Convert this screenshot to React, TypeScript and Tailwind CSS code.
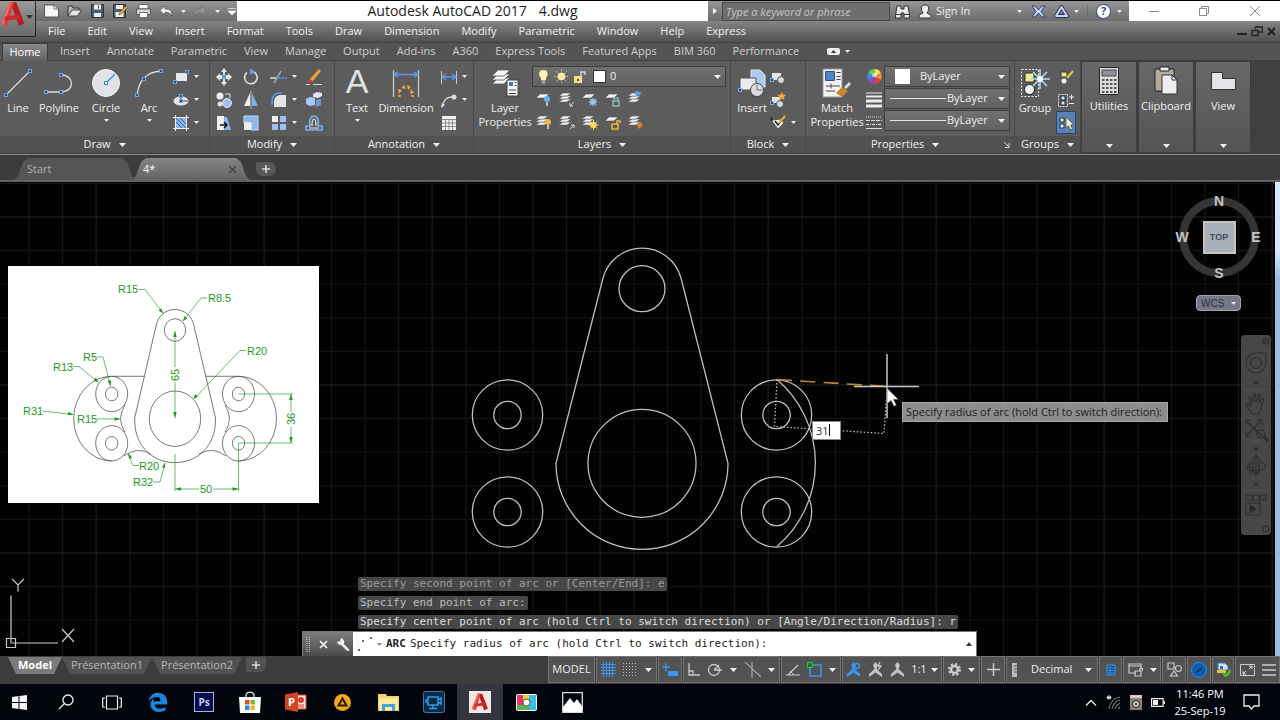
import React from "react";

type Kids = { children?: React.ReactNode };

function Icon({ w = 18, h = 18, vb, children }: { w?: number; h?: number; vb?: string } & Kids) {
  return (
    <svg width={w} height={h} viewBox={vb ?? `0 0 ${w} ${h}`} fill="none" aria-hidden="true" className="shrink-0">
      {children}
    </svg>
  );
}

function Caret({ size = "s" }: { size?: "s" | "m" }) {
  return size === "s" ? (
    <Icon w={5} h={3}>
      <path d="M0 0h5L2.500 3z" fill="#eee" />
    </Icon>
  ) : (
    <Icon w={7} h={4}>
      <path d="M0 0h7L3.500 4z" fill="#f2f2f2" />
    </Icon>
  );
}

const node = (x: number, y: number) => (
  <rect x={x - 1.5} y={y - 1.5} width="3" height="3" fill="#3a4a66" stroke="#6fa8ee" />
);

/* ---------- ribbon building blocks ---------- */

function Panel({ title, width, launcher, children }: { title: string; width: string; launcher?: boolean } & Kids) {
  return (
    <section className={`flex shrink-0 flex-col border-r border-[#474747] ${width}`}>
      <div className="flex flex-1 items-start px-1 pt-1">{children}</div>
      <div className="flex h-[17px] items-center bg-[#515151]">
        <button className="flex flex-1 items-center justify-center gap-2">
          {title}
          <Caret size="m" />
        </button>
        {launcher && (
          <button aria-label={`${title} settings`} className="mr-1">
            <Icon w={6} h={6}>
              <path d="M0 0l4 4M5 1v4.500H1" stroke="#ddd" />
            </Icon>
          </button>
        )}
      </div>
    </section>
  );
}

function Big({ label, width, arrow, children }: { label: string; width: string; arrow?: boolean } & Kids) {
  return (
    <button className={`flex shrink-0 flex-col items-center ${width}`}>
      <span className="flex h-9 items-center justify-center">{children}</span>
      <span className="text-center leading-[14px]">{label}</span>
      {arrow && (
        <span className="mt-1">
          <Caret />
        </span>
      )}
    </button>
  );
}

function Small({ label, arrow, active, children }: { label: string; arrow?: boolean; active?: boolean } & Kids) {
  return (
    <button
      aria-label={label}
      className={`flex h-[23px] items-center justify-center gap-1 ${active ? "border border-[#26456f] bg-[#5b82b8]" : ""}`}
    >
      {children}
      {arrow && <Caret />}
    </button>
  );
}

/* ---------- title and menus ---------- */

function AutocadMark({ size }: { size: number }) {
  return (
    <svg width={size} height={size} viewBox="0 0 24 24" aria-hidden="true">
      <path d="M9 1h6l7.500 20-5 2L11 5z" fill="#b71c22" />
      <path d="M9 1h4L6.500 23 1 21z" fill="#df3a35" />
      <path d="M9 1h2L3.500 22 1 21z" fill="#ee6a62" />
      <path d="M5 14.500l12-2 1.500 4L4 18z" fill="#cf2a2a" />
    </svg>
  );
}

function TitleBar() {
  return (
    <div className="flex h-5 bg-gradient-to-b from-[#979797] to-[#6b6b6b]">
      <div className="flex w-[237px] shrink-0 items-center gap-2 pl-[44px]">
        <button aria-label="New">
          <Icon w={15} h={14}>
            <path d="M.5 1h10l4 4v8H.5z" fill="#f4f4f4" stroke="#555" />
            <path d="M10 1v4h4" stroke="#777" />
          </Icon>
        </button>
        <button aria-label="Open">
          <Icon w={15} h={14}>
            <path d="M1 12V2h4l1 2h6v3" stroke="#333" fill="#bbb" />
            <path d="M1 12l4-6h9.500l-4 6z" fill="#e4e4e4" stroke="#444" />
          </Icon>
        </button>
        <button aria-label="Save">
          <Icon w={15} h={14}>
            <path d="M1.500.5h12v13h-12z" fill="#4f5c6b" stroke="#333" />
            <path d="M4 .5h7v5H4zM4 9h7v4H4z" fill="#eee" />
            <path d="M8.500 1.500v3" stroke="#444" />
          </Icon>
        </button>
        <button aria-label="Save As">
          <Icon w={15} h={14}>
            <path d="M.5.5h12v13H.5z" fill="#4f5c6b" stroke="#333" />
            <path d="M3 1h7v4H3zM2.500 8h8v5h-8z" fill="#eee" />
            <path d="M6 11l1-3 6-6 1.500 1.500-6 6z" fill="#f0b64a" stroke="#7a4a12" strokeWidth=".7" />
          </Icon>
        </button>
        <button aria-label="Plot">
          <Icon w={15} h={14}>
            <path d="M3 .5h9V5H3z" fill="#fff" stroke="#666" />
            <path d="M.5 5h14v5.500H.5z" fill="#d9d9d9" stroke="#555" />
            <path d="M3.500 8.500h8v5h-8z" fill="#fff" stroke="#5b6f8c" />
          </Icon>
        </button>
        <button aria-label="Undo" className="flex items-center gap-2">
          <Icon w={14} h={12}>
            <path d="M6 .8v3c5 0 7 2 7 7.500-1.500-3-3.500-4-7-4v3L.8 5.500z" fill="#f0f0f0" stroke="#444" strokeWidth=".7" />
          </Icon>
          <Caret />
        </button>
        <button aria-label="Redo" className="flex items-center gap-2">
          <Icon w={13} h={12}>
            <path d="M7 .8v3c-5 0-7 2-7 7.500 1.500-3 3.500-4 7-4v3l5.200-4.800z" fill="#959595" stroke="#6f6f6f" strokeWidth=".7" />
          </Icon>
          <Caret />
        </button>
        <button aria-label="Customize toolbar">
          <Icon w={8} h={7}>
            <path d="M0 .5h8M0 3h8L4 7z" fill="#fff" stroke="#fff" strokeWidth=".6" />
          </Icon>
        </button>
      </div>
      <h1 className="flex flex-1 items-center justify-center gap-3 bg-white text-sm whitespace-nowrap text-[#1c1c1c]">
        <span>Autodesk AutoCAD 2017</span>
        <span>4.dwg</span>
      </h1>
      <div className="flex w-[421px] shrink-0 items-center">
        <button aria-label="Collapse search" className="flex w-[14px] justify-center">
          <Icon w={4} h={6}>
            <path d="M0 0l4 3-4 3z" fill="#fff" />
          </Icon>
        </button>
        <input
          aria-label="Search"
          placeholder="Type a keyword or phrase"
          className="h-[19px] w-[168px] border border-[#484848] bg-[#6e6e6e] px-[3px] text-[11px] italic outline-none placeholder:text-[#c4c4c4]"
        />
        <button aria-label="Find" className="ml-[5px]">
          <Icon w={15} h={15}>
            <path d="M2 2h4v3h3V2h4l1.500 9v3H9V9H6v5H.5v-3z" fill="#e8e8e8" stroke="#333" />
            <path d="M1 10.500h4.500M9 10.500h5" stroke="#333" />
          </Icon>
        </button>
        <button className="ml-2 flex w-[104px] items-center gap-1 text-[11px] text-[#ededed]">
          <Icon w={14} h={15}>
            <path d="M7 1c5 0 4 5 2 8l4 2v3H1v-3l4-2C3 6 2 1 7 1z" fill="#efefef" stroke="#333" />
          </Icon>
          <span className="flex-1 text-left">Sign In</span>
          <Caret />
        </button>
        <button aria-label="Exchange Apps" className="ml-[9px]">
          <Icon w={15} h={13}>
            <path d="M1 1h3l3.500 4L11 1h3l-4 5.500 4 5.500h-3L7.500 8 4 12H1l4-5.500z" fill="#c9dbf5" stroke="#2c3d78" />
          </Icon>
        </button>
        <button aria-label="Stay Connected" className="ml-2 flex items-center gap-[5px]">
          <Icon w={15} h={13}>
            <path d="M7.500 2L2 11h11z" stroke="#2b3a63" strokeWidth="4" strokeLinejoin="round" />
            <path d="M7.500 2L2 11h11z" stroke="#c9d6ee" strokeWidth="2" strokeLinejoin="round" />
          </Icon>
          <Caret />
        </button>
        <span className="mx-2 h-3 border-l border-[#6d6d6d]" />
        <button aria-label="Help" className="flex items-center gap-[6px]">
          <span className="flex size-[15px] items-center justify-center rounded-full border border-[#27467c] bg-white text-[11px] font-bold text-[#27509a]">
            ?
          </span>
          <Caret />
        </button>
      </div>
      <div className="flex w-[151px] shrink-0 items-center justify-around bg-white">
        <button aria-label="Minimize">
          <Icon w={10} h={10}>
            <path d="M0 5.500h10" stroke="#8c8c8c" />
          </Icon>
        </button>
        <button aria-label="Restore">
          <Icon w={10} h={10}>
            <path d="M.5 2.500h7v7h-7zM2.500 2.500v-2h7v7h-2" stroke="#8c8c8c" />
          </Icon>
        </button>
        <button aria-label="Close">
          <Icon w={10} h={10}>
            <path d="M0 0l10 10M10 0L0 10" stroke="#8c8c8c" />
          </Icon>
        </button>
      </div>
    </div>
  );
}

const menus = ["File", "Edit", "View", "Insert", "Format", "Tools", "Draw", "Dimension", "Modify", "Parametric", "Window", "Help", "Express"];

function MenuBar() {
  return (
    <nav className="flex h-[21px] items-center bg-gradient-to-b from-[#858585] to-[#515151] pr-1 pl-12 text-[11px] text-[#f0f0f0]">
      <div className="flex flex-1 gap-[22px]">
        {menus.map((m) => (
          <button key={m}>{m}</button>
        ))}
      </div>
      <div className="flex items-center gap-1">
        <Icon w={10} h={11}>
          <path d="M0 8h10" stroke="#222" strokeWidth="2" />
        </Icon>
        <Icon w={12} h={11}>
          <path d="M4.500 3V1h7v5H8M1 4.500h6v5H1z" stroke="#222" strokeWidth="1.400" />
        </Icon>
        <Icon w={9} h={11}>
          <path d="M1 2l7 7M8 2L1 9" stroke="#222" strokeWidth="2" />
        </Icon>
      </div>
    </nav>
  );
}

const ribbonTabs = ["Insert", "Annotate", "Parametric", "View", "Manage", "Output", "Add-ins", "A360", "Express Tools", "Featured Apps", "BIM 360", "Performance"];

function RibbonTabs() {
  return (
    <nav className="flex h-[19px] items-center gap-3 border-t border-b border-[#3f3f3f] bg-[#545454] text-[11px] text-[#cfcfcf]">
      <button className="ml-[2px] flex h-[18px] w-[46px] items-center justify-center border-x border-t border-[#3b3b3b] bg-gradient-to-b from-[#8a8a8a] to-[#606060] text-white">
        Home
      </button>
      <div className="flex gap-[17px]">
        {ribbonTabs.map((t) => (
          <button key={t} className="whitespace-nowrap">
            {t}
          </button>
        ))}
      </div>
      <button aria-label="Ribbon display" className="ml-4 flex items-center gap-[5px]">
        <Icon w={13} h={7}>
          <rect width="13" height="7" rx="2" fill="#eee" />
          <path d="M4 5l2.500-3L9 5z" fill="#333" />
        </Icon>
        <Caret />
      </button>
    </nav>
  );
}

/* ---------- ribbon ---------- */

function DrawPanel() {
  return (
    <Panel title="Draw" width="w-[210px]">
      <Big label="Line" width="w-7">
        <Icon w={30} h={30}>
          <path d="M3 27L27 3" stroke="#ddd" strokeWidth="1.300" />
          {node(3, 27)}
          {node(27, 3)}
        </Icon>
      </Big>
      <Big label="Polyline" width="w-[54px]">
        <Icon w={30} h={30}>
          <path d="M2 24h15c14 0 14-17 0-17" stroke="#ddd" strokeWidth="1.300" />
          {node(2, 24)}
          {node(17, 24)}
          {node(17, 7)}
        </Icon>
      </Big>
      <Big label="Circle" width="w-10" arrow>
        <Icon w={30} h={30}>
          <circle cx="15" cy="15" r="13.500" fill="#dfe2e6" stroke="#f6f6f6" />
          <path d="M15 15l9-9" stroke="#4c87d6" strokeWidth="1.300" />
          <rect x="13.500" y="13.500" width="3" height="3" fill="#fff" stroke="#3f82dc" />
        </Icon>
      </Big>
      <Big label="Arc" width="w-[46px]" arrow>
        <Icon w={30} h={30}>
          <path d="M3 27C5 12 12 4 27 3" stroke="#ddd" strokeWidth="1.300" />
          {node(3, 27)}
          {node(10, 11)}
          {node(27, 3)}
        </Icon>
      </Big>
      <div className="flex flex-col">
        <Small label="Rectangle" arrow>
          <Icon>
            <path d="M4 5h11v8H4z" fill="#e8e8e8" />
            {node(3, 14)}
            {node(15, 4)}
          </Icon>
        </Small>
        <Small label="Ellipse" arrow>
          <Icon>
            <ellipse cx="9" cy="10" rx="7.500" ry="4.500" fill="#e4e6ea" />
            <path d="M9 5v5h7" stroke="#444" />
            {node(9, 10)}
            {node(9, 5)}
          </Icon>
        </Small>
        <Small label="Hatch" arrow>
          <Icon>
            <path d="M4 4h10v10H4z" fill="#8fb4e8" />
            <path d="M4 8l6 6M4 4l10 10M8 4l6 6" stroke="#2c5ca5" />
            <path d="M3.500 1v16M14.500 1v16M1 3.500h16M1 14.500h16" stroke="#eee" />
          </Icon>
        </Small>
      </div>
    </Panel>
  );
}

function ModifyPanel() {
  return (
    <Panel title="Modify" width="w-[125px]">
      <div className="grid flex-1 grid-cols-[20px_34px_30px_1fr]">
        <Small label="Move">
          <Icon>
            <path d="M9 0l3 4h-2v3h3V5l4 4-4 4v-2h-3v3h2l-3 4-3-4h2v-3H5v2L1 9l4-4v2h3V4H6z" fill="#e9e9e9" />
            <rect x="7" y="7" width="4" height="4" fill="#6a9be0" />
          </Icon>
        </Small>
        <Small label="Rotate">
          <Icon>
            <path d="M5 4.500a6.300 6.300 0 1 0 7-.5" stroke="#ddd" strokeWidth="1.600" />
            <path d="M8 0l5 4-5 3z" fill="#5b9cf0" />
          </Icon>
        </Small>
        <Small label="Trim" arrow>
          <Icon>
            <path d="M0 10h6" stroke="#ddd" strokeWidth="1.500" />
            <path d="M9 10h9" stroke="#5b9cf0" strokeWidth="1.500" strokeDasharray="2 1" />
            <path d="M4 15l7-12" stroke="#9ab" strokeWidth="1.500" />
          </Icon>
        </Small>
        <Small label="Erase">
          <Icon>
            <path d="M4 12L14 1l2 2-9 11z" fill="#f0a23a" />
            <path d="M3 14l2-3 3 2-3 2z" fill="#d8402c" />
            <path d="M1 16.500h4M8 16.500h9" stroke="#ddd" />
          </Icon>
        </Small>
        <Small label="Copy">
          <Icon>
            <circle cx="5" cy="5" r="3.500" fill="#eee" />
            <circle cx="5" cy="13" r="2.500" fill="#ddd" />
            <circle cx="12" cy="12" r="4.500" fill="#9cc0f0" stroke="#dcebff" />
            <path d="M10 3h5v4" stroke="#ddd" />
          </Icon>
        </Small>
        <Small label="Mirror">
          <Icon>
            <path d="M8 2v13H2z" fill="#eee" />
            <path d="M10 2v13h6z" fill="#7fb0ee" />
            <path d="M9 0v18" stroke="#bbb" />
          </Icon>
        </Small>
        <Small label="Fillet" arrow>
          <Icon>
            <path d="M4 16V11c0-5 3-7 7-7h5v12z" fill="#e5e5e5" />
            <path d="M2 14V10c0-6 4-8 8-8h2" stroke="#5b9cf0" strokeWidth="1.500" />
          </Icon>
        </Small>
        <Small label="Explode">
          <Icon>
            <path d="M1 8l4-2 5 1v7l-5 1-4-2z" fill="#a9c9f2" />
            <path d="M8 3l4-2 5 1v3l-4 2-5-1z" fill="#dfeaf8" />
            <path d="M11 9l5-1v6l-5 2z" fill="#6d9cdb" />
          </Icon>
        </Small>
        <Small label="Stretch">
          <Icon>
            <path d="M2 2h7v14H2z" fill="#f0f0f0" />
            <path d="M9 3h3l4 13H9z" fill="#8db6ec" />
            <path d="M5 11h6M9 8l3 3-3 3" stroke="#111" strokeWidth="1.500" />
          </Icon>
        </Small>
        <Small label="Scale">
          <Icon>
            <path d="M2 2h14v14H9V9H2z" fill="#8db6ec" stroke="#c8defa" />
            <path d="M2 8h7.500v8H2z" fill="#ececec" />
          </Icon>
        </Small>
        <Small label="Array" arrow>
          <Icon>
            <path d="M2 2h6v6H2z" fill="#f0f0f0" />
            <path d="M10 2h6v6h-6zM2 10h6v6H2zM10 10h6v6h-6z" fill="#9cc2f3" />
          </Icon>
        </Small>
        <Small label="Offset">
          <Icon>
            <path d="M1 16h16v-4h-4C14 8 13 2 9 2S4 8 5 12H1z" stroke="#7eaef0" strokeWidth="1.600" />
            <path d="M4 14h10M7 12c0-4 0-7 2-7s2 3 2 7" stroke="#e8e8e8" strokeWidth="1.200" />
          </Icon>
        </Small>
      </div>
    </Panel>
  );
}

function AnnotationPanel() {
  return (
    <Panel title="Annotation" width="w-[139px]">
      <Big label="Text" width="w-9" arrow>
        <span className="self-start font-['Liberation_Sans',sans-serif] text-[34px] leading-8 text-[#e2e2e2]">A</span>
      </Big>
      <Big label="Dimension" width="w-[62px]">
        <Icon w={30} h={30}>
          <path d="M2.500 2v27M27.500 2v27" stroke="#ccc" strokeWidth="1.300" />
          <path d="M3 6.500h24M7 4L3 6.500 7 9M23 4l4 2.500L23 9" stroke="#5b9cf0" strokeWidth="1.300" />
          <path d="M8 26l-1-5 4 1zM10 20l3-3 2 4zM16 17l4 2-3 3zM20 21l3 4-4 1z" fill="#f2a83a" />
          <path d="M7 28h3M20 28h3" stroke="#e39422" strokeWidth="2" />
        </Icon>
      </Big>
      <div className="flex flex-1 flex-col">
        <Small label="Linear" arrow>
          <Icon>
            <path d="M1.500 3v13M16.500 3v13" stroke="#ccc" />
            <path d="M2 9h14M6 6L2 9l4 3M12 6l4 3-4 3" stroke="#5b9cf0" strokeWidth="1.400" />
          </Icon>
        </Small>
        <Small label="Leader" arrow>
          <Icon>
            <path d="M2 16C4 9 6 6 12 6" stroke="#ddd" strokeWidth="1.300" />
            <path d="M1 17l1-5 3 2z" fill="#ddd" />
            <circle cx="14" cy="6" r="2.500" fill="#ddd" />
          </Icon>
        </Small>
        <Small label="Table">
          <span className="mr-2">
            <Icon w={14} h={14}>
              <path d="M0 0h14v14H0z" fill="#f0f0f0" />
              <path d="M0 3.500h14M0 7h14M0 10.500h14M3.500 3v11M7 3v11M10.500 3v11" stroke="#777" strokeWidth=".8" />
            </Icon>
          </span>
        </Small>
      </div>
    </Panel>
  );
}

const layerTools: { label: string; stack: boolean; mark: React.ReactNode }[] = [
  { label: "Layer Off", stack: false, mark: <><circle cx="12" cy="9" r="3" fill="#6ab0f5" /><path d="M12 12v4" stroke="#ddd" strokeWidth="1.500" /></> },
  { label: "Isolate", stack: true, mark: <path d="M16 12l-4 4m0-3v3h3" stroke="#ddd" /> },
  { label: "Freeze", stack: false, mark: <path d="M12 8v8M8 12h8M9 9l6 6M15 9l-6 6" stroke="#9fc8ff" strokeWidth="1.300" /> },
  { label: "Lock", stack: false, mark: <path d="M9 11h6v5H9zM10 11V8h4v3" stroke="#85b8b4" strokeWidth="1.500" /> },
  { label: "Make Current", stack: true, mark: <path d="M6 3l4-2 5 2-4 3z" fill="#5b9cf0" /> },
  { label: "Turn All On", stack: true, mark: <><circle cx="13" cy="9" r="3" fill="#f7b23c" /><path d="M13 12v4" stroke="#ddd" strokeWidth="1.500" /></> },
  { label: "Unisolate", stack: true, mark: <path d="M12 16l4-4m-3 0h3v3" stroke="#ddd" /> },
  { label: "Thaw All", stack: true, mark: <><circle cx="12.500" cy="12" r="3" fill="#fbdc5a" /><path d="M12.500 7v10M7.500 12h10M9 8.500l7 7M16 8.500l-7 7" stroke="#fbdc5a" /></> },
  { label: "Unlock", stack: false, mark: <path d="M8 11h6v5H8zM13 11V8h3v2" stroke="#f2b62f" strokeWidth="1.500" /> },
  { label: "Match Layer", stack: true, mark: <path d="M10 12l3-3 3 3-4 4z" fill="#e0852b" /> },
];

function LayersPanel() {
  return (
    <Panel title="Layers" width="w-[257px]">
      <Big label="Layer Properties" width="w-[54px]">
        <Icon w={30} h={30}>
          {[11, 7, 3].map((y) => (
            <path key={y} d={`M2 ${y + 5}l6-6 12 0-6 6z`} fill="#f4f4f4" stroke="#555" strokeWidth=".8" />
          ))}
          <path d="M17 12h11v16H17z" fill="#f5f5f5" stroke="#444" />
          <path d="M19 14h4v4h-4z" fill="#3b78c8" />
          <path d="M24.500 14.500h2M24.500 17.500h2M19 22h7M19 25.500h7" stroke="#444" />
        </Icon>
      </Big>
      <div className="flex flex-1 flex-col">
        <div className="mt-px flex h-[21px] items-center gap-1 border border-[#3d3d3d] bg-gradient-to-b from-[#707070] to-[#616161] px-1">
          <Icon w={13} h={15}>
            <path d="M6.500 1c5 0 5 5 2.500 8v2H4V9C1 6 1.500 1 6.500 1z" fill="#fff2b0" />
            <path d="M4.500 12h4M5 14h3" stroke="#ddd" />
          </Icon>
          <Icon w={15} h={15}>
            <circle cx="7.500" cy="7.500" r="3.800" fill="#fff0a8" />
            <path d="M7.500 0v15M0 7.500h15M2 2l11 11M13 2L2 13" stroke="#e8d9a8" strokeDasharray="1.500 1" strokeWidth=".8" />
          </Icon>
          <Icon w={14} h={14}>
            <path d="M1 6h8v7H1z" fill="#f3df83" />
            <path d="M8 6V2h4v3" stroke="#ddd" strokeWidth="1.300" />
            <path d="M4 9h2v2H4z" fill="#555" />
          </Icon>
          <span className="ml-[2px] size-[13px] border border-[#333] bg-white" />
          <select aria-label="Layer" className="flex-1 appearance-none bg-transparent text-[11px] outline-none">
            <option>0</option>
          </select>
          <Caret size="m" />
        </div>
        <div className="grid grid-cols-[repeat(5,23px)]">
          {layerTools.map((t) => (
            <Small key={t.label} label={t.label}>
              <Icon>
                {t.stack ? (
                  [8, 5, 2].map((y) => (
                    <path key={y} d={`M1 ${y + 4}l4-3h8l-4 3z`} fill="#f1f1f1" stroke="#666" strokeWidth=".6" />
                  ))
                ) : (
                  <path d="M1 8l4-4h9l-4 4z" fill="#f1f1f1" stroke="#555" strokeWidth=".6" />
                )}
                {t.mark}
              </Icon>
            </Small>
          ))}
        </div>
      </div>
    </Panel>
  );
}

function BlockPanel() {
  return (
    <Panel title="Block" width="w-[75px]">
      <Big label="Insert" width="w-[34px]">
        <Icon w={30} h={30}>
          <path d="M14 2h9l5 5v12H14z" fill="#a9c9ee" stroke="#dcebfb" />
          <path d="M3 10h16v12H3z" fill="#e9e9ee" stroke="#555" />
          <circle cx="20" cy="22" r="6.500" fill="#dcdde4" stroke="#444" />
          <path d="M20 17v5h5" stroke="#777" />
          {node(3, 22)}
        </Icon>
      </Big>
      <div className="flex flex-1 flex-col items-start">
        <Small label="Create Block">
          <Icon>
            <path d="M3 5h9v7H3z" fill="#e5e5e5" />
            <circle cx="12" cy="12" r="3.500" fill="#d4d8e0" stroke="#555" />
            {node(3, 12)}
          </Icon>
        </Small>
        <Small label="Edit Block">
          <Icon>
            <path d="M3 6h8v6H3z" fill="#e5e5e5" />
            <circle cx="11" cy="13" r="3.500" fill="#d4d8e0" stroke="#555" />
            <path d="M13 1l1 2.500 3 .5-2 2 .5 3L13 7.500 10 9l.5-3-2-2 3-.5z" fill="#f2a43a" />
            {node(3, 12)}
          </Icon>
        </Small>
        <Small label="Edit Attributes" arrow>
          <Icon>
            <path d="M2 6l7 9 6-6-3-4z" fill="#eee" stroke="#555" />
            <path d="M2 3l1 4M6 7l3 4 4-5" stroke="#222" strokeWidth="1.500" />
            <path d="M10 9l6-7" stroke="#f2a43a" strokeWidth="2" />
          </Icon>
        </Small>
      </div>
    </Panel>
  );
}

function PropertiesPanel() {
  const box = "flex h-[21px] items-center border border-[#3d3d3d] bg-gradient-to-b from-[#707070] to-[#616161] pr-1";
  return (
    <Panel title="Properties" width="w-[209px]" launcher>
      <Big label="Match Properties" width="w-[54px]">
        <Icon w={30} h={30}>
          <path d="M1 1h19v28H1z" fill="#f2f2f2" stroke="#999" />
          <path d="M3.500 3.500h9v9h-9z" fill="#4b86c9" stroke="#33537c" />
          <path d="M14.500 4.500h4M14.500 8.500h4M14.500 11.500h4M4 18h14M4 23h9M9 15.500v5" stroke="#444" />
          <path d="M14 25l6-6 6 4-6 6z" fill="#c98130" />
          <path d="M23 20l5-5" stroke="#ddd" strokeWidth="3" />
        </Icon>
      </Big>
      <div className="flex w-5 shrink-0 flex-col items-center">
        <Small label="Color">
          <Icon w={15} h={15}>
            <path d="M7.500 7.500V0A7.500 7.500 0 0 1 14 4z" fill="#f6e64a" />
            <path d="M7.500 7.500L14 4a7.500 7.500 0 0 1 0 7z" fill="#f08a3a" />
            <path d="M7.500 7.500L14 11a7.500 7.500 0 0 1-6.500 4z" fill="#de3f3f" />
            <path d="M7.500 7.500V15A7.500 7.500 0 0 1 1 11z" fill="#8d4bc0" />
            <path d="M7.500 7.500L1 11a7.500 7.500 0 0 1 0-7z" fill="#3f83e8" />
            <path d="M7.500 7.500L1 4a7.500 7.500 0 0 1 6.500-4z" fill="#5cc765" />
            <circle cx="7.500" cy="6" r="2.500" fill="#fff" opacity=".5" />
          </Icon>
        </Small>
        <Small label="Lineweight">
          <Icon w={16} h={16}>
            <path d="M0 1h16" stroke="#eee" />
            <path d="M0 4.500h16" stroke="#eee" strokeWidth="2" />
            <path d="M0 9h16M0 14h16" stroke="#eee" strokeWidth="3" />
          </Icon>
        </Small>
        <Small label="Linetype">
          <Icon w={16} h={14}>
            <path d="M0 1h16" stroke="#ddd" strokeDasharray="1 1" />
            <path d="M0 4.500h16" stroke="#ddd" strokeDasharray="4 1" />
            <path d="M0 8.500h16" stroke="#ddd" strokeDasharray="3 1 1 1" />
            <path d="M0 12.500h16" stroke="#ddd" />
          </Icon>
        </Small>
      </div>
      <div className="flex min-w-0 flex-1 flex-col gap-px pt-px">
        <div className={box}>
          <span className="mx-[10px] size-[15px] shrink-0 bg-white" />
          <select aria-label="Object color" className="min-w-0 flex-1 appearance-none bg-transparent text-[11px] outline-none">
            <option>ByLayer</option>
          </select>
          <Caret size="m" />
        </div>
        {["Object lineweight", "Object linetype"].map((l) => (
          <div key={l} className={box}>
            <span className="mr-px ml-[5px] w-14 shrink-0 border-t border-[#e4e4e4]" />
            <select aria-label={l} className="min-w-0 flex-1 appearance-none bg-transparent text-[11px] outline-none">
              <option>ByLayer</option>
            </select>
            <Caret size="m" />
          </div>
        ))}
      </div>
    </Panel>
  );
}

function GroupsPanel() {
  return (
    <Panel title="Groups" width="w-[66px]">
      <Big label="Group" width="w-8">
        <Icon w={30} h={30}>
          <path d="M1.500 1.500h17v27h-17z" stroke="#eee" strokeDasharray="2 1.500" />
          <path d="M5 5h9v9H5z" fill="#f1ec8e" stroke="#333" />
          <circle cx="9.500" cy="21.500" r="5" fill="#eef1f5" stroke="#222" />
          <path d="M20 1v20M10 11h20M13 4l14 14M27 4L13 18" stroke="#a9dcff" strokeWidth="1.500" />
          <circle cx="20" cy="11" r="3" fill="#fff" />
        </Icon>
      </Big>
      <div className="ml-[5px] flex w-[22px] flex-col">
        <Small label="Ungroup">
          <Icon>
            <path d="M4 4h6v5H4z" fill="#f1ec8e" stroke="#333" />
            <circle cx="7" cy="13" r="2.500" fill="#eee" />
            <path d="M10 10l6-7" stroke="#e8c94a" strokeWidth="2" />
          </Icon>
        </Small>
        <Small label="Group Edit">
          <Icon>
            <path d="M1.500 3.500h9v12h-9z" stroke="#ddd" strokeDasharray="2 1" />
            <path d="M4 5h4v4H4zM4 10h4v4H4z" fill="#dfe8f5" stroke="#234" />
            <path d="M12 6h5M14.500 3.500v5M12 12.500h5" stroke="#eee" />
          </Icon>
        </Small>
        <Small label="Group Selection" active>
          <Icon>
            <path d="M3 4h4v4H3z" fill="#f1ec8e" stroke="#234" />
            <path d="M3 10h4v4H3z" fill="#e8eef7" stroke="#234" />
            <path d="M9 3v11l2.500-2 2 4 2-1-2-4H17z" fill="#f4f1c8" stroke="#444" strokeWidth=".7" />
          </Icon>
        </Small>
      </div>
    </Panel>
  );
}

function Collapsed({ label, children }: { label: string } & Kids) {
  return (
    <button className="flex w-14 shrink-0 flex-col items-center border border-[#3c3c3c] bg-gradient-to-b from-[#686868] to-[#545454] pt-1 pb-1">
      <span className="flex h-[30px] items-center">{children}</span>
      <span className="mt-[2px] flex-1">{label}</span>
      <Caret size="m" />
    </button>
  );
}

function Ribbon() {
  return (
    <div className="flex h-[93px] bg-[#404040] pb-px text-[11px] text-[#f0f0f0]">
      <div className="flex bg-[#5c5c5c]">
        <DrawPanel />
        <ModifyPanel />
        <AnnotationPanel />
        <LayersPanel />
        <BlockPanel />
        <PropertiesPanel />
        <GroupsPanel />
      </div>
      <div className="flex gap-px">
        <Collapsed label="Utilities">
          <Icon w={20} h={28}>
            <rect x=".5" y=".5" width="19" height="27" rx="1" fill="#dcdcdc" stroke="#222" />
            <path d="M3 3h14v6H3z" fill="#8d929b" stroke="#444" />
            {[12, 16, 20, 24].map((y) =>
              [3, 7, 11, 15].map((x) => <rect key={`${x}-${y}`} x={x} y={y} width="2.500" height="2" fill="#555" />),
            )}
          </Icon>
        </Collapsed>
        <Collapsed label="Clipboard">
          <Icon w={26} h={30}>
            <path d="M2 3h19v22H2z" fill="#b5a99c" stroke="#222" />
            <path d="M7 1h9v4H7z" fill="#eee" stroke="#222" />
            <path d="M9 9h10l5 5v14H9z" fill="#eeeef2" stroke="#333" />
            <path d="M19 9v5h5" stroke="#333" />
          </Icon>
        </Collapsed>
        <Collapsed label="View">
          <Icon w={25} h={18}>
            <path d="M.5.5h11v6h13v11H.5z" fill="#e2e4e8" stroke="#333" />
          </Icon>
        </Collapsed>
      </div>
    </div>
  );
}

/* ---------- file tabs ---------- */

function FileTabs() {
  const slope =
    "[clip-path:polygon(0_100%,4px_82%,9px_18%,14px_0,calc(100%-14px)_0,calc(100%-9px)_18%,calc(100%-4px)_82%,100%_100%)]";
  return (
    <div className="flex h-7 items-end border-t border-b-2 border-t-[#8a8a8a] border-b-[#626262] bg-[#3c3c3c] pl-[14px] text-[11px]">
      <button className={`h-[22px] w-[122px] bg-[#555] pl-[13px] text-left text-[#b0b0b0] ${slope}`}>Start</button>
      <button className={`-ml-1 flex h-[22px] w-[118px] items-center justify-between bg-gradient-to-b from-[#848484] to-[#646464] pr-[14px] pl-[11px] text-white ${slope}`}>
        4*
        <Icon w={7} h={7}>
          <path d="M0 0l7 7M7 0L0 7" stroke="#444" strokeWidth="1.500" />
        </Icon>
      </button>
      <button aria-label="New drawing" className="mb-1 ml-[6px] flex h-[14px] w-5 items-center justify-center rounded-r-lg rounded-bl-lg bg-[#585858]">
        <Icon w={8} h={8}>
          <path d="M4 0v8M0 4h8" stroke="#ddd" strokeWidth="1.500" />
        </Icon>
      </button>
    </div>
  );
}

/* ---------- drawing area ---------- */

const GRID = 33.6;

function GridLines() {
  const xs = Array.from({ length: 38 }, (_, i) => 29 + i * GRID);
  const ys = Array.from({ length: 14 }, (_, i) => 183.400 + i * GRID);
  return (
    <g>
      {xs.map((x, i) => (
        <path key={`x${i}`} d={`M${x} 182V656`} stroke={i % 5 === 2 ? "#22242b" : "#17181a"} />
      ))}
      {ys.map((y, i) => (
        <path key={`y${i}`} d={`M0 ${y}H1274`} stroke={i % 5 === 1 ? "#22242b" : "#17181a"} />
      ))}
    </g>
  );
}

function Model() {
  return (
    <g stroke="#bdbdbd" strokeWidth="1.300" fill="none">
      <circle cx="642" cy="288.700" r="23" />
      <circle cx="642" cy="463.300" r="54" />
      <path d="M603 278A40.400 40.400 0 0 1 681 278L728 463.400A86 86 0 0 1 556 463.400Z" />
      {[507.500, 776.500].map((x) =>
        [415, 512].map((y) => (
          <g key={`${x}-${y}`}>
            <circle cx={x} cy={y} r="35.200" />
            <circle cx={x} cy={y} r="13.700" />
          </g>
        )),
      )}
      <path d="M777 379.500A110 110 0 0 1 777 546.500" />
      <path d="M777 379.500L774.500 426.500L884 433.500L887 390" strokeDasharray="1.500 2" />
      <path d="M777 379.500L887 386.500" stroke="#c08a35" strokeWidth="1.600" strokeDasharray="15 8.300" />
      <path d="M887 354V418M854 386.500H919" stroke="#c8c8c8" strokeWidth="1.500" />
    </g>
  );
}

function Ucs() {
  return (
    <g stroke="#c8c8c8" strokeWidth="1.200">
      <path d="M11 595.500V643H58M6.500 638.500h9v9h-9z" />
      <path d="M12 579l6 6 6-6M18 585v6.500M62 629l12 13M74 629l-12 13" />
    </g>
  );
}

function Cursor() {
  return <path d="M887 388v16l4-3.500 3 6 2.500-1.500-3-5.500h5z" fill="#fff" stroke="#222" strokeWidth=".5" />;
}

function ReferenceSheet() {
  const g = "#1c9a1c";
  const labels: [string, number, number][] = [
    ["R15", 118, 293], ["R8.5", 208, 302], ["R5", 83, 361], ["R13", 53, 371], ["R31", 23, 415],
    ["R15", 77, 423], ["R20", 247, 355], ["R20", 139, 470], ["R32", 133, 486], ["50", 200, 493],
  ];
  const heads = [
    "M163 313.500l-4.500-3 2.800-2.300z", "M183 321l1.500-5 2.700 2.500z", "M193.500 399l1.500-5 3 2.700z", "M98.500 382.500l-5-2 2.300-3z",
    "M110.500 386l-3-5 3.500-.8z", "M73.500 414.500l-5.500.8.300-3.500z", "M120 419l-5.500 1.700v-3.500z", "M128.500 453l3.500 4.500-3 1.500z",
    "M165 462.500v5.500l-3-.8z", "M175 331l1.700 6h-3.500zM175 418l1.700-6h-3.500z", "M175 489l6-1.700v3.500zM238.500 489l-6-1.700v3.500z",
    "M291 394l1.700 6h-3.500zM291 443l1.700-6h-3.500z",
  ];
  return (
    <svg viewBox="8 266 311 237" className="absolute top-[84px] left-2 h-[237px] w-[311px] bg-white" role="img" aria-label="Dimensioned part drawing">
      <g fill="none" stroke="#555" strokeWidth=".8">
        <ellipse cx="175" cy="330" rx="10.700" ry="11.300" />
        <ellipse cx="175" cy="418.700" rx="25.700" ry="27.700" />
        <path d="M156 326C160 304 190 304 194 326L215.500 418C217 477.500 133 477.500 134.700 418Z" />
        {[111.700, 238.500].map((x) =>
          [394, 443.300].map((y) => (
            <g key={`${x}-${y}`}>
              <ellipse cx={x} cy={y} rx="16" ry="17.700" />
              <ellipse cx={x} cy={y} rx="6.200" ry="6.800" />
            </g>
          )),
        )}
        <path d="M145 376.300H111.700A38 42.350 0 0 0 111.700 461M206 376.300H238.500A38 42.350 0 0 1 238.500 461" />
        <path d="M125 405Q116 419 125 432M225 405Q234 419 225 432M124 456Q137 446 151 454M226 456Q213 446 199 454" />
      </g>
      <g fill="none" stroke={g} strokeWidth=".8" opacity=".8">
        <path d="M139 289.500h6L163 313M207 298h-6L183 321M97 357h6l7.500 29M73 366.500h6L98 382M42 411l31 3.500M97 419h23M246 350.500h-6L194 399M139 465.500h-6l-5-12M153 482h7l5-19" />
        <path d="M175 331v36M175 382v36M175 454v37M238.500 443v48M175 489h24M213 489h25.500M238.500 394H293M238.500 443H293M291 394v18M291 427v16" />
      </g>
      <path d={heads.join("")} fill={g} />
      <g fill={g} className="font-['Liberation_Sans',sans-serif] text-[11px]">
        {labels.map(([t, x, y]) => (
          <text key={`${t}${x}`} x={x} y={y}>
            {t}
          </text>
        ))}
        <text transform="translate(179 381) rotate(-90)">65</text>
        <text transform="translate(295 425) rotate(-90)">36</text>
      </g>
    </svg>
  );
}

function ViewCube() {
  const letter = "absolute flex size-5 items-center justify-center";
  return (
    <div className="absolute top-[15px] right-[21px] flex size-20 items-center justify-center rounded-full border-8 border-[#353535] font-['Liberation_Sans',sans-serif] text-sm font-bold text-[#c4c4c4]">
      <button className="flex size-[33px] items-center justify-center border-2 border-[#c3c3c3] bg-[#a9afb8] text-[9px] text-[#454c58]">TOP</button>
      <span className={`${letter} -top-[14px]`}>N</span>
      <span className={`${letter} -bottom-[14px]`}>S</span>
      <span className={`${letter} -left-[15px]`}>W</span>
      <span className={`${letter} -right-[15px]`}>E</span>
    </div>
  );
}

function NavBar() {
  return (
    <div className="absolute top-[153px] right-[9px] flex h-[200px] w-[30px] flex-col items-center rounded bg-[#474747]">
      <svg width="30" height="200" viewBox="0 0 30 200" fill="none" stroke="#2d2d2d" strokeWidth="1.100" aria-hidden="true">
        <circle cx="25" cy="6" r="3" />
        <path d="M23.500 4.500l3 3M26.500 4.500l-3 3" />
        <path d="M15 18h10v10a10 10 0 1 1-10-10z" />
        <circle cx="15" cy="28" r="5.500" />
        <path d="M13 47h4l-2 2z" fill="#292929" />
        <path d="M0 54.500h30" stroke="#505050" />
        <path d="M10 78c-2-4-5-7-5-9 2-2 4 2 5 2l-2-9c2-2 3 2 4 6l1-9c2-1 2 3 2 8l3-8c2 0 1 4 0 9l4-5c2 1-1 5-2 9 0 3-2 6-3 7h-6z" />
        <path d="M5 86l16 15M5 101L20 86M5 90v-5h5M16 85h5v5M5 97v5h5" />
        <circle cx="20" cy="99" r="4" />
        <path d="M23 102l4 4" strokeWidth="2.500" />
        <path d="M13 113h4l-2 2z" fill="#292929" />
        <path d="M15 121v20M12 124l3-4 3 4M12 124v14h6v-14" />
        <path d="M18 127c10 2 10 8-6 9M12 128c-5 1-7 3-6 6l5 2M8 131l4 4-4 4" />
        <path d="M13 149h4l-2 2z" fill="#292929" />
        <path d="M0 155.500h30" stroke="#505050" />
        <path d="M5 160h6v5H5zM12 160h6v5h-6zM19 160h6v5h-6zM5 168h14v12H5z" />
        <path d="M9 170.500l6 3.500-6 3.500z" fill="#292929" />
        <circle cx="25" cy="194" r="3" />
      </svg>
    </div>
  );
}

function CommandLine() {
  const hist = "self-start rounded-[2px] bg-[#474747] px-[2px] leading-[14px]";
  return (
    <div className="absolute bottom-0 left-[302px] w-[675px] font-['DejaVu_Sans_Mono',monospace] text-[11px]">
      <div className="mb-[2px] ml-14 flex flex-col gap-[5px] whitespace-nowrap">
        <p className={`${hist} text-[#9a9a9a]`}>Specify second point of arc or [Center/End]: e</p>
        <p className={`${hist} text-[#bcbcbc]`}>Specify end point of arc:</p>
        <p className={`${hist} text-[#dedede]`}>Specify center point of arc (hold Ctrl to switch direction) or [Angle/Direction/Radius]: r</p>
      </div>
      <div className="flex h-[25px] items-stretch border border-b-0 border-[#777] bg-white text-[#222]">
        <div className="flex w-[50px] items-center justify-between bg-gradient-to-b from-[#7e7e7e] to-[#4b4b4b] px-[3px]">
          <Icon w={4} h={15}>
            <path d="M1 0v15M3.500 0v15" stroke="#ccc" strokeDasharray="1 1" />
          </Icon>
          <Icon w={9} h={9}>
            <path d="M1 1l7 7M8 1L1 8" stroke="#fff" strokeWidth="1.600" />
          </Icon>
          <Icon w={13} h={13}>
            <path d="M5 6l6 6" stroke="#eee" strokeWidth="2.500" strokeLinecap="round" />
            <path d="M4 0l-1 3L1 4 0 3c0 3 2 4 4 4s4-2 3-4-1-2-3-3z" fill="#eee" />
          </Icon>
        </div>
        <div className="flex w-[33px] items-center gap-1 pl-1">
          <Icon w={16} h={16}>
            <path d="M1 13h2v2H1zM5 4h2v2H5zM13 1h2v2h-2z" fill="#3c6ccb" />
          </Icon>
          <Icon w={5} h={3}>
            <path d="M0 0h5L2.500 3z" fill="#888" />
          </Icon>
        </div>
        <label htmlFor="cmd" className="flex items-center whitespace-nowrap">
          <b className="mr-1">ARC</b> Specify radius of arc (hold Ctrl to switch direction):
        </label>
        <input id="cmd" className="min-w-0 flex-1 bg-transparent outline-none" />
        <span className="flex items-center pr-1">
          <Icon w={6} h={4}>
            <path d="M0 4h6L3 0z" fill="#333" />
          </Icon>
        </span>
      </div>
    </div>
  );
}

function Canvas() {
  return (
    <main className="relative min-h-[474px] flex-1 overflow-hidden bg-[#030303]">
      <svg viewBox="0 182 1280 474" width="1280" height="474" fill="none" className="absolute top-0 left-0" role="img" aria-label="Model space">
        <GridLines />
        <Model />
        <Ucs />
        <Cursor />
      </svg>
      <ReferenceSheet />
      <input
        aria-label="Radius"
        defaultValue="31"
        className="absolute top-[239px] left-[812px] h-[19px] w-[29px] border border-[#888] bg-white px-[3px] text-[11px] text-[#333] outline-none"
      />
      <span className="absolute top-[242px] left-[829px] h-3 border-l border-black" />
      <p className="absolute top-[220px] left-[902px] flex h-5 w-[266px] items-center border border-[#a8a8a8] bg-[#8d8d8d] px-[3px] text-[11px] whitespace-nowrap text-[#1d1d1d]">
        Specify radius of arc (hold Ctrl to switch direction):
      </p>
      <ViewCube />
      <button className="absolute top-[113px] right-[39px] flex h-4 w-[45px] items-center justify-between rounded border border-[#a3a3b5] bg-[#77778a] px-1 font-['Liberation_Sans',sans-serif] text-[10px] text-[#2f2f3a]">
        WCS <Caret />
      </button>
      <NavBar />
      <div className="absolute inset-y-0 right-0 w-[5px] bg-gradient-to-b from-[#d6e8fa] from-15% to-[#9dbde2] to-20%" />
      <CommandLine />
    </main>
  );
}

/* ---------- status bar ---------- */

function Cell({ width, children }: { width: string } & Kids) {
  return (
    <div className={`flex h-[27px] shrink-0 items-center justify-around border border-[#737373] bg-[#525252] ${width}`}>{children}</div>
  );
}

function StatusButton({ label, children }: { label: string } & Kids) {
  return <button aria-label={label}>{children}</button>;
}

function Person({ color, children }: { color: string } & Kids) {
  return (
    <Icon w={15} h={15}>
      <path d="M7.500 0l2.500 3-1.500 4 5.500 5v3l-6.500-4.500L1 15v-3l5.500-5L5 3z" fill={color} />
      {children}
    </Icon>
  );
}

function StatusBar() {
  const slope = "h-[17px] rounded-b-md [clip-path:polygon(0_0,100%_0,calc(100%-8px)_100%,8px_100%)]";
  return (
    <div className="flex h-7 justify-between bg-[#3d3d3d] text-[11px] text-[#eee]">
      <div className="flex items-start pt-px pl-2">
        <button className={`w-[54px] bg-[#7b7b7b] font-bold text-white ${slope}`}>Model</button>
        <button className={`w-[90px] bg-[#525252] text-[#b8b8b8] ${slope}`}>Présentation1</button>
        <button className={`w-[90px] bg-[#525252] text-[#b8b8b8] ${slope}`}>Présentation2</button>
        <button aria-label="New layout" className="ml-1 flex h-[15px] w-5 items-center justify-center rounded-br-lg bg-[#525252]">
          <Icon w={8} h={8}>
            <path d="M4 0v8M0 4h8" stroke="#ddd" strokeWidth="1.500" />
          </Icon>
        </button>
      </div>
      <div className="flex gap-px">
        <Cell width="w-[47px]">
          <button>MODEL</button>
        </Cell>
        <Cell width="w-[61px]">
          <StatusButton label="Grid">
            <Icon w={15} h={15}>
              <path d="M2.500 0v15M5.500 0v15M8.500 0v15M11.500 0v15M0 2.500h15M0 5.500h15M0 8.500h15M0 11.500h15" stroke="#3b97f5" />
            </Icon>
          </StatusButton>
          <StatusButton label="Snap">
            <Icon w={14} h={14}>
              {[0, 3, 6, 9, 12].map((y) => (
                <path key={y} d={`M0 ${y + 0.5}h14`} stroke="#bbb" strokeDasharray="1 2" />
              ))}
            </Icon>
          </StatusButton>
          <Caret size="m" />
        </Cell>
        <Cell width="w-6">
          <StatusButton label="Dynamic Input">
            <Icon w={16} h={14}>
              <path d="M4 0v8M0 4h8" stroke="#3b97f5" strokeWidth="1.400" />
              <rect x="6" y="8" width="10" height="5" rx="1" fill="#3b97f5" />
            </Icon>
          </StatusButton>
        </Cell>
        <Cell width="w-[97px]">
          <StatusButton label="Ortho">
            <Icon w={12} h={13}>
              <path d="M1 0v12h11M1 8h4v4" stroke="#ccc" strokeWidth="1.300" />
            </Icon>
          </StatusButton>
          <StatusButton label="Polar">
            <Icon w={15} h={14}>
              <circle cx="7" cy="7" r="5.500" stroke="#ccc" strokeWidth="1.300" />
              <path d="M7 7h8M7 7l5-5" stroke="#ccc" strokeWidth="1.300" />
            </Icon>
          </StatusButton>
          <Caret size="m" />
          <StatusButton label="Isoplane">
            <Icon w={16} h={16}>
              <path d="M0 0l16 15M7 0v16" stroke="#aaa" strokeWidth="1.200" />
            </Icon>
          </StatusButton>
          <Caret size="m" />
        </Cell>
        <Cell width="w-[60px]">
          <StatusButton label="Tracking">
            <Icon w={14} h={12}>
              <path d="M0 11h14M2 11L12 1" stroke="#ccc" strokeWidth="1.200" />
              <path d="M4 7l4 4" stroke="#ccc" />
            </Icon>
          </StatusButton>
          <StatusButton label="Object Snap">
            <Icon w={15} h={15}>
              <path d="M3 3h11v11H3z" stroke="#3b97f5" strokeWidth="1.500" />
              <path d="M.5.500h5v5h-5z" fill="#173" stroke="#2ecc40" />
            </Icon>
          </StatusButton>
          <Caret size="m" />
        </Cell>
        <Cell width="w-[100px]">
          <StatusButton label="Annotation Visibility">
            <Person color="#3b97f5">
              <circle cx="11" cy="4" r="2.500" stroke="#3b97f5" strokeWidth="1.300" />
            </Person>
          </StatusButton>
          <StatusButton label="Auto Scale">
            <Person color="#c4c4c4">
              <path d="M12 0l-2 4h3l-3 4" stroke="#c4c4c4" strokeWidth="1.300" />
            </Person>
          </StatusButton>
          <StatusButton label="Annotation Scale">
            <Person color="#c4c4c4" />
          </StatusButton>
          <button className="flex items-center gap-1 whitespace-nowrap">
            1:1 <Caret size="m" />
          </button>
        </Cell>
        <Cell width="w-[37px]">
          <StatusButton label="Workspace">
            <Icon w={13} h={13}>
              <circle cx="6.500" cy="6.500" r="3.500" stroke="#ccc" strokeWidth="2.500" />
              <circle cx="6.500" cy="6.500" r="5.500" stroke="#ccc" strokeWidth="2" strokeDasharray="2.300 2" />
            </Icon>
          </StatusButton>
          <Caret size="m" />
        </Cell>
        <Cell width="w-6">
          <StatusButton label="Monitor">
            <Icon w={13} h={13}>
              <path d="M6.500 0v13M0 6.500h13" stroke="#ccc" strokeWidth="1.500" />
            </Icon>
          </StatusButton>
        </Cell>
        <Cell width="w-[92px]">
          <Icon w={5} h={14}>
            <path d="M0 0h5v14H0z" fill="#bbb" />
            <path d="M2 3h3M2 6h3M2 9h3" stroke="#555" />
          </Icon>
          <select aria-label="Units" className="ml-1 w-11 appearance-none bg-transparent text-[11px] outline-none">
            <option>Decimal</option>
          </select>
          <Caret size="m" />
        </Cell>
        <Cell width="w-[23px]">
          <StatusButton label="Quick Properties">
            <Icon w={10} h={12}>
              <path d="M1 1h8v10H1z" stroke="#3b97f5" fill="#1b4e8c" />
              <path d="M2 4h6M2 6.500h6M2 9h6M4 2v9" stroke="#3b97f5" strokeWidth=".8" />
            </Icon>
          </StatusButton>
        </Cell>
        <Cell width="w-[38px]">
          <StatusButton label="Lock UI">
            <Icon w={15} h={14}>
              <path d="M8 10H1V1h12v4M1 3h12" stroke="#ccc" strokeWidth="1.200" />
              <path d="M7 8h6v5H7zM12 8V5.500h2.500V8" stroke="#ccc" strokeWidth="1.200" />
            </Icon>
          </StatusButton>
          <Caret size="m" />
        </Cell>
        <Cell width="w-6">
          <StatusButton label="Isolate Objects">
            <Icon w={15} h={15}>
              <path d="M1 1h6v6H1zM7 9l3.500 5h-7z" stroke="#ccc" strokeWidth="1.200" />
              <circle cx="11.500" cy="6.500" r="3" stroke="#ccc" strokeWidth="1.200" />
            </Icon>
          </StatusButton>
        </Cell>
        <Cell width="w-6">
          <StatusButton label="Hardware Acceleration">
            <Icon w={16} h={16}>
              <circle cx="8" cy="8" r="7.500" fill="#0f5cae" stroke="#2b8cf0" />
              <path d="M6 10l5-4" stroke="#0a2d5a" strokeWidth="1.600" />
            </Icon>
          </StatusButton>
        </Cell>
        <Cell width="w-[22px]">
          <StatusButton label="Autodesk Trusted DWG">
            <Icon w={15} h={15}>
              <path d="M2 1h7l3 3v4H2z" fill="#cfe2f7" stroke="#3d78b8" />
              <path d="M4 4h3v3H4z" fill="#2d6fb5" />
              <path d="M1 8h9v3H1z" fill="#e8c22e" />
              <path d="M7 11l3 3 5-6" stroke="#5ab52c" strokeWidth="2.500" />
            </Icon>
          </StatusButton>
        </Cell>
        <Cell width="w-[45px]">
          <StatusButton label="Clean Screen">
            <Icon w={15} h={12}>
              <path d="M.5.500h14v11H.5z" stroke="#ccc" />
              <path d="M9 5l3-3M9 2h3v3M6 7l-3 3M3 7v3h3" stroke="#ddd" />
            </Icon>
          </StatusButton>
          <StatusButton label="Customization">
            <Icon w={14} h={12}>
              <path d="M0 1h14M0 6h14M0 11h14" stroke="#ccc" strokeWidth="1.500" />
            </Icon>
          </StatusButton>
        </Cell>
      </div>
    </div>
  );
}

/* ---------- taskbar ---------- */

const apps: { name: string; icon: React.ReactNode }[] = [
  { name: "Search", icon: <Icon w={16} h={16}><circle cx="10" cy="6" r="5" stroke="#eee" strokeWidth="1.300" /><path d="M6.500 9.500L1 15" stroke="#eee" strokeWidth="1.300" /></Icon> },
  { name: "Task View", icon: <Icon w={20} h={15}><path d="M4.500 1h11v13h-11zM3 3H.7v9H3M17 3h2.300v9H17" stroke="#eee" strokeWidth="1.200" /></Icon> },
  { name: "Edge", icon: <Icon w={20} h={20} vb="0 0 24 24"><path d="M1 11C2 4 7 1 12 1c7 0 11 5 11 11v3H8c.5 4 3 5 6 5s5-.8 7-2v4c-2 1-4 2-8 2-6 0-10-4-10-9 0-4 2-6 5-8-1 1-1.500 2-1.600 4H15c0-3-1-5-4-5-4 0-8 2-10 5z" fill="#1c86dc" /></Icon> },
  { name: "Photoshop", icon: <span className="flex size-5 items-center justify-center border border-[#9fb0f5] bg-[#0b0c4a] text-[10px] font-bold text-[#c6d0ff]">Ps</span> },
  { name: "Store", icon: <Icon w={22} h={22}><path d="M7 7V5c0-5 8-5 8 0v2" stroke="#ccc" strokeWidth="1.500" /><path d="M0 6h22l-1 16H1z" fill="#fff" /><path d="M6 9h4.500v4.500H6z" fill="#e2502c" /><path d="M11.500 9H16v4.500h-4.500z" fill="#78b82e" /><path d="M6 14.500h4.500V19H6z" fill="#2a8fd8" /><path d="M11.500 14.500H16V19h-4.500z" fill="#f0b429" /></Icon> },
  { name: "PowerPoint", icon: <span className="relative flex h-5 w-[22px] items-center"><Icon w={22} h={20}><path d="M10 3h11v14H10z" fill="#f7e5df" stroke="#d04526" /><circle cx="16" cy="8" r="3" fill="#d04526" /><path d="M13 13h6M13 15h6" stroke="#d04526" /><path d="M0 2.500L13 0v20L0 17.500z" fill="#d04526" /></Icon><b className="absolute left-[3px] text-[11px] text-white">P</b></span> },
  { name: "Converter", icon: <Icon w={17} h={17}><circle cx="8.500" cy="8.500" r="8.500" fill="#f0a81f" /><path d="M8.500 4.500l4 7h-8z" stroke="#2a1c00" strokeWidth="2" /></Icon> },
  { name: "File Explorer", icon: <Icon w={21} h={18}><path d="M0 1h8l1 2h12v15H0z" fill="#f4d36b" /><path d="M1 5h19v12H1z" fill="#fbe9a0" /><path d="M4 18v-7h13v7h-3v-4H7v4z" fill="#3ea6dd" /></Icon> },
  { name: "Recorder", icon: <Icon w={22} h={22}><rect x=".5" y=".5" width="21" height="21" rx="2" fill="#0b2a45" stroke="#3b7ab0" /><path d="M5 6h10v8H5zM15 9l3-2v6l-3-2M10 14v3M6 17.500h8M3 8v4" stroke="#2f9fe6" strokeWidth="1.500" /></Icon> },
  { name: "AutoCAD", icon: <span className="flex size-[22px] items-center justify-center bg-[#f5e6e3]"><AutocadMark size={18} /></span> },
  { name: "Media", icon: <Icon w={21} h={17}><rect width="21" height="17" rx="2" fill="#fff" /><path d="M1 1h7v15H1z" fill="#e5356e" /><path d="M7 1h7v15H7z" fill="#f2d32c" /><path d="M13 1h7v15h-7z" fill="#37bdea" /><path d="M1 11h12v5H1z" fill="#55b848" /><circle cx="10.500" cy="8.500" r="3.500" fill="#fff" stroke="#555" /></Icon> },
  { name: "Photos", icon: <Icon w={21} h={21}><path d="M.7.700h19.600v19.600H.7z" stroke="#ddd" strokeWidth="1.300" /><path d="M1 15l7-9 4 5 3-4 5 7v6H1z" fill="#fff" /></Icon> },
];

function Taskbar() {
  return (
    <footer className="flex h-9 items-stretch justify-between bg-[#03050c] text-white">
      <div className="flex">
        <button aria-label="Start" className="flex w-[43px] items-center justify-center pr-1">
          <Icon w={15} h={15}>
            <path d="M0 2l6.500-1v6H0zM7.500.900L15 0v7H7.500zM0 8h6.500v6L0 13zM7.500 8H15v7l-7.500-1z" fill="#f4f4f4" />
          </Icon>
        </button>
        {apps.map((a) => (
          <button key={a.name} aria-label={a.name} className={`flex w-[46px] items-center justify-center ${a.name === "AutoCAD" ? "bg-[#33363e]" : ""}`}>
            {a.icon}
          </button>
        ))}
      </div>
      <div className="flex items-center gap-[9px] pr-5">
        <button aria-label="Show hidden icons">
          <Icon w={12} h={7}>
            <path d="M1 6.500l5-5 5 5" stroke="#eee" strokeWidth="1.300" />
          </Icon>
        </button>
        <Icon w={15} h={16}>
          <path d="M3 15C4 8 8 4 14 3M6 15c1-5 4-8 8-9M9 15c1-3 3-5 5-6M12 15l2-2" stroke="#777" strokeWidth="1.200" />
          <path d="M3 1v5M.5 3.500h5M1 2l4 3M5 2L1 5" stroke="#fff" strokeWidth=".8" />
        </Icon>
        <Icon w={12} h={15}>
          <path d="M0 0h12v15H0z" fill="#8a7d7a" />
          <path d="M0 0h12v3H0z" fill="#e3c9c5" />
          <circle cx="6" cy="9" r="3.500" fill="#ccc" stroke="#222" />
          <circle cx="6" cy="9" r="1" fill="#222" />
        </Icon>
        <Icon w={14} h={9}>
          <path d="M.6.600h11.500v7.800H.6z" stroke="#eee" strokeWidth="1.200" />
          <path d="M2 2h5v5H2zM12.500 3H14v3h-1.500z" fill="#eee" />
        </Icon>
        <div className="flex w-[52px] flex-col text-center text-[11px] leading-[17px] whitespace-nowrap">
          <span>11:46 PM</span>
          <span>25-Sep-19</span>
        </div>
        <button aria-label="Notifications" className="ml-2">
          <Icon w={17} h={16}>
            <path d="M1 1h15v11h-5l-2.500 3L6 12H1z" stroke="#eee" strokeWidth="1.300" />
          </Icon>
        </button>
      </div>
    </footer>
  );
}

export default function App() {
  return (
    <div className="flex min-h-screen flex-col overflow-hidden bg-black font-['Open_Sans','Noto_Sans',sans-serif]">
      <header className="relative border-t border-black">
        <TitleBar />
        <MenuBar />
        <RibbonTabs />
        <button
          aria-label="Application menu"
          className="absolute top-0 left-0 flex h-9 w-9 items-start border-r border-b border-[#222] bg-gradient-to-b from-[#9a9a9a] to-[#6a6a6a]"
        >
          <AutocadMark size={26} />
          <span className="mt-[14px]">
            <Icon w={7} h={4}>
              <path d="M0 0h7L3.500 4z" fill="#333" />
            </Icon>
          </span>
        </button>
      </header>
      <Ribbon />
      <FileTabs />
      <Canvas />
      <StatusBar />
      <Taskbar />
    </div>
  );
}
